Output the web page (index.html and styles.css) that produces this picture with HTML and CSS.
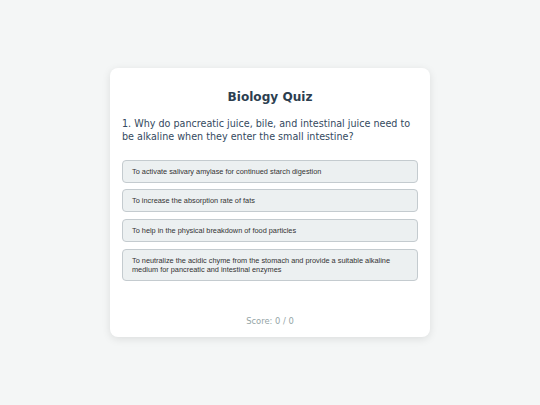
FILE: index.html
```html
<!DOCTYPE html>
<html lang="en">
<head>
    <meta charset="UTF-8">
    <meta name="viewport" content="width=device-width, initial-scale=1.0">
    <title>Biology Quiz</title>
    <link rel="stylesheet" href="styles.css">
</head>
<body>
    <div class="quiz-container">
        <h1>Biology Quiz</h1>
        <div class="question">1. Why do pancreatic juice, bile, and intestinal juice need to be alkaline when they enter the small intestine?</div>
        <div class="options">
            <button class="option-btn">To activate salivary amylase for continued starch digestion</button>
            <button class="option-btn">To increase the absorption rate of fats</button>
            <button class="option-btn">To help in the physical breakdown of food particles</button>
            <button class="option-btn">To neutralize the acidic chyme from the stomach and provide a suitable alkaline medium for pancreatic and intestinal enzymes</button>
        </div>
        <div class="feedback"></div>
        <div class="score">Score: 0 / 0</div>
    </div>
</body>
</html>
```

FILE: styles.css
```css
body {
    font-family: "DejaVu Sans", Verdana, sans-serif;
    background-color: #f4f6f6;
    margin: 0;
    padding: 0;
    min-height: 100vh;
    display: flex;
    align-items: center;
    justify-content: center;
    color: #2c3e50;
}
.quiz-container {
    width: 320px;
    box-sizing: border-box;
    padding: 22px 12px 11px;
    background-color: #ffffff;
    border-radius: 8px;
    box-shadow: 0 2px 8px rgba(0, 0, 0, 0.1);
}
h1 {
    font-size: 12.1px;
    text-align: center;
    margin: 0 0 13px;
    color: #2c3e50;
}
.question {
    font-size: 9.6px;
    line-height: 1.4;
    color: #34495e;
    margin-bottom: 16px;
}
.options {
    display: flex;
    flex-direction: column;
    gap: 6.6px;
}
.option-btn {
    font-family: "Liberation Sans", Arial, sans-serif;
    font-size: 7.35px;
    text-align: left;
    color: #333333;
    background-color: #ecf0f1;
    border: 1px solid #c4cbcf;
    border-radius: 4px;
    padding: 6px 9px;
    cursor: pointer;
}
.option-btn:hover {
    background-color: #dde4e6;
}
.feedback {
    height: 22px;
    margin-top: 13.5px;
}
.score {
    text-align: center;
    font-size: 8.4px;
    color: #95a5a6;
}
```
